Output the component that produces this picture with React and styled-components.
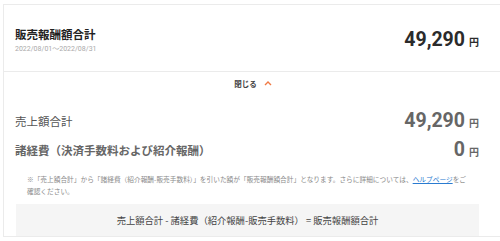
import React from 'react'
import styled, { createGlobalStyle } from 'styled-components'

const GlobalStyle = createGlobalStyle`
    html, body {
        margin: 0;
        padding: 0;
        background: #fff;
        overflow: hidden;
    }
    body {
        font-family: Roboto, "Noto Sans CJK JP", sans-serif;
    }
`

const Page = styled.div`
    width: 500px;
    height: 241px;
    padding: 4px 0 0 3px;
    box-sizing: border-box;
    overflow: hidden;
`

const Card = styled.div`
    width: 500px;
    border: 1px solid #ebebeb;
    box-sizing: border-box;
`

const Summary = styled.div`
    display: flex;
    justify-content: space-between;
    align-items: flex-start;
    height: 67px;
    box-sizing: border-box;
    padding: 20px 23px 0 11px;
    border-bottom: 1px solid #ebebeb;
`

const TitleWrap = styled.div`
    display: flex;
    flex-direction: column;
`

const Title = styled.h2`
    margin: 0;
    font-family: "Noto Sans CJK JP", sans-serif;
    font-size: 11.5px;
    line-height: 18px;
    font-weight: 700;
    color: #222;
`

const Period = styled.span`
    margin-top: 1px;
    font-size: 7px;
    line-height: 10px;
    color: #aaa;
`

const Amount = styled.div`
    display: flex;
    align-items: baseline;
    margin-top: ${p => p.$top || 0}px;
    color: ${p => p.$muted ? '#666' : '#2b2b2b'};
`

const Figure = styled.span`
    font-family: Roboto, sans-serif;
    font-size: 19.5px;
    line-height: 24px;
    font-weight: 700;
`

const Yen = styled.span`
    margin-left: 4px;
    font-family: "Noto Sans CJK JP", sans-serif;
    font-size: 10px;
    font-weight: 700;
`

const Detail = styled.div`
    padding: 5px 11px 0 11px;
`

const Toggle = styled.div`
    display: flex;
    justify-content: center;
    align-items: center;
    gap: 7px;
    height: 12px;
    font-family: "Noto Sans CJK JP", sans-serif;
    font-size: 7.5px;
    font-weight: 700;
    color: #444;
`

const Row = styled.div`
    display: flex;
    justify-content: space-between;
    align-items: center;
    height: 29px;
    padding-right: 12px;
    margin-top: ${p => p.$top || 0}px;
`

const Label = styled.span`
    font-family: "Noto Sans CJK JP", sans-serif;
    font-size: 11.5px;
    font-weight: ${p => p.$bold ? 700 : 400};
    color: ${p => p.$bold ? '#666' : '#555'};
`

const Note = styled.p`
    margin: 9px 0 0;
    padding: 0 24px 0 12px;
    font-family: "Noto Sans CJK JP", sans-serif;
    font-size: 6.7px;
    line-height: 12px;
    color: #8a8a8a;
`

const HelpLink = styled.a`
    color: #2a7bd0;
    text-decoration: underline;
`

const Formula = styled.div`
    display: flex;
    justify-content: center;
    align-items: center;
    height: 32px;
    margin: 7px 12px 0 1px;
    background: #f5f5f5;
    font-family: "Noto Sans CJK JP", sans-serif;
    font-size: 9.3px;
    color: #444;
`

const Chevron = () => (
  <svg width="8" height="6" viewBox="0 0 8 6" fill="none">
    <path d="M1 5 L4 2 L7 5" stroke="#f07a45" strokeWidth="1.4" />
  </svg>
)

const App = () => {
  return (
    <Page>
      <GlobalStyle />
      <Card>
        <Summary>
          <TitleWrap>
            <Title>販売報酬額合計</Title>
            <Period>2022/08/01～2022/08/31</Period>
          </TitleWrap>
          <Amount $top={3}>
            <Figure>49,290</Figure>
            <Yen>円</Yen>
          </Amount>
        </Summary>
        <Detail>
          <Toggle>
            <span>閉じる</span>
            <Chevron />
          </Toggle>
          <Row $top={17}>
            <Label>売上額合計</Label>
            <Amount $muted>
              <Figure>49,290</Figure>
              <Yen>円</Yen>
            </Amount>
          </Row>
          <Row>
            <Label $bold>諸経費（決済手数料および紹介報酬）</Label>
            <Amount $muted>
              <Figure>0</Figure>
              <Yen>円</Yen>
            </Amount>
          </Row>
          <Note>
            ※「売上額合計」から「諸経費（紹介報酬-販売手数料）」を引いた額が「販売報酬額合計」となります。さらに詳細については、<HelpLink>ヘルプページ</HelpLink>をご確認ください。
          </Note>
          <Formula>売上額合計 - 諸経費（紹介報酬-販売手数料） = 販売報酬額合計</Formula>
        </Detail>
      </Card>
    </Page>
  )
}

export default App
